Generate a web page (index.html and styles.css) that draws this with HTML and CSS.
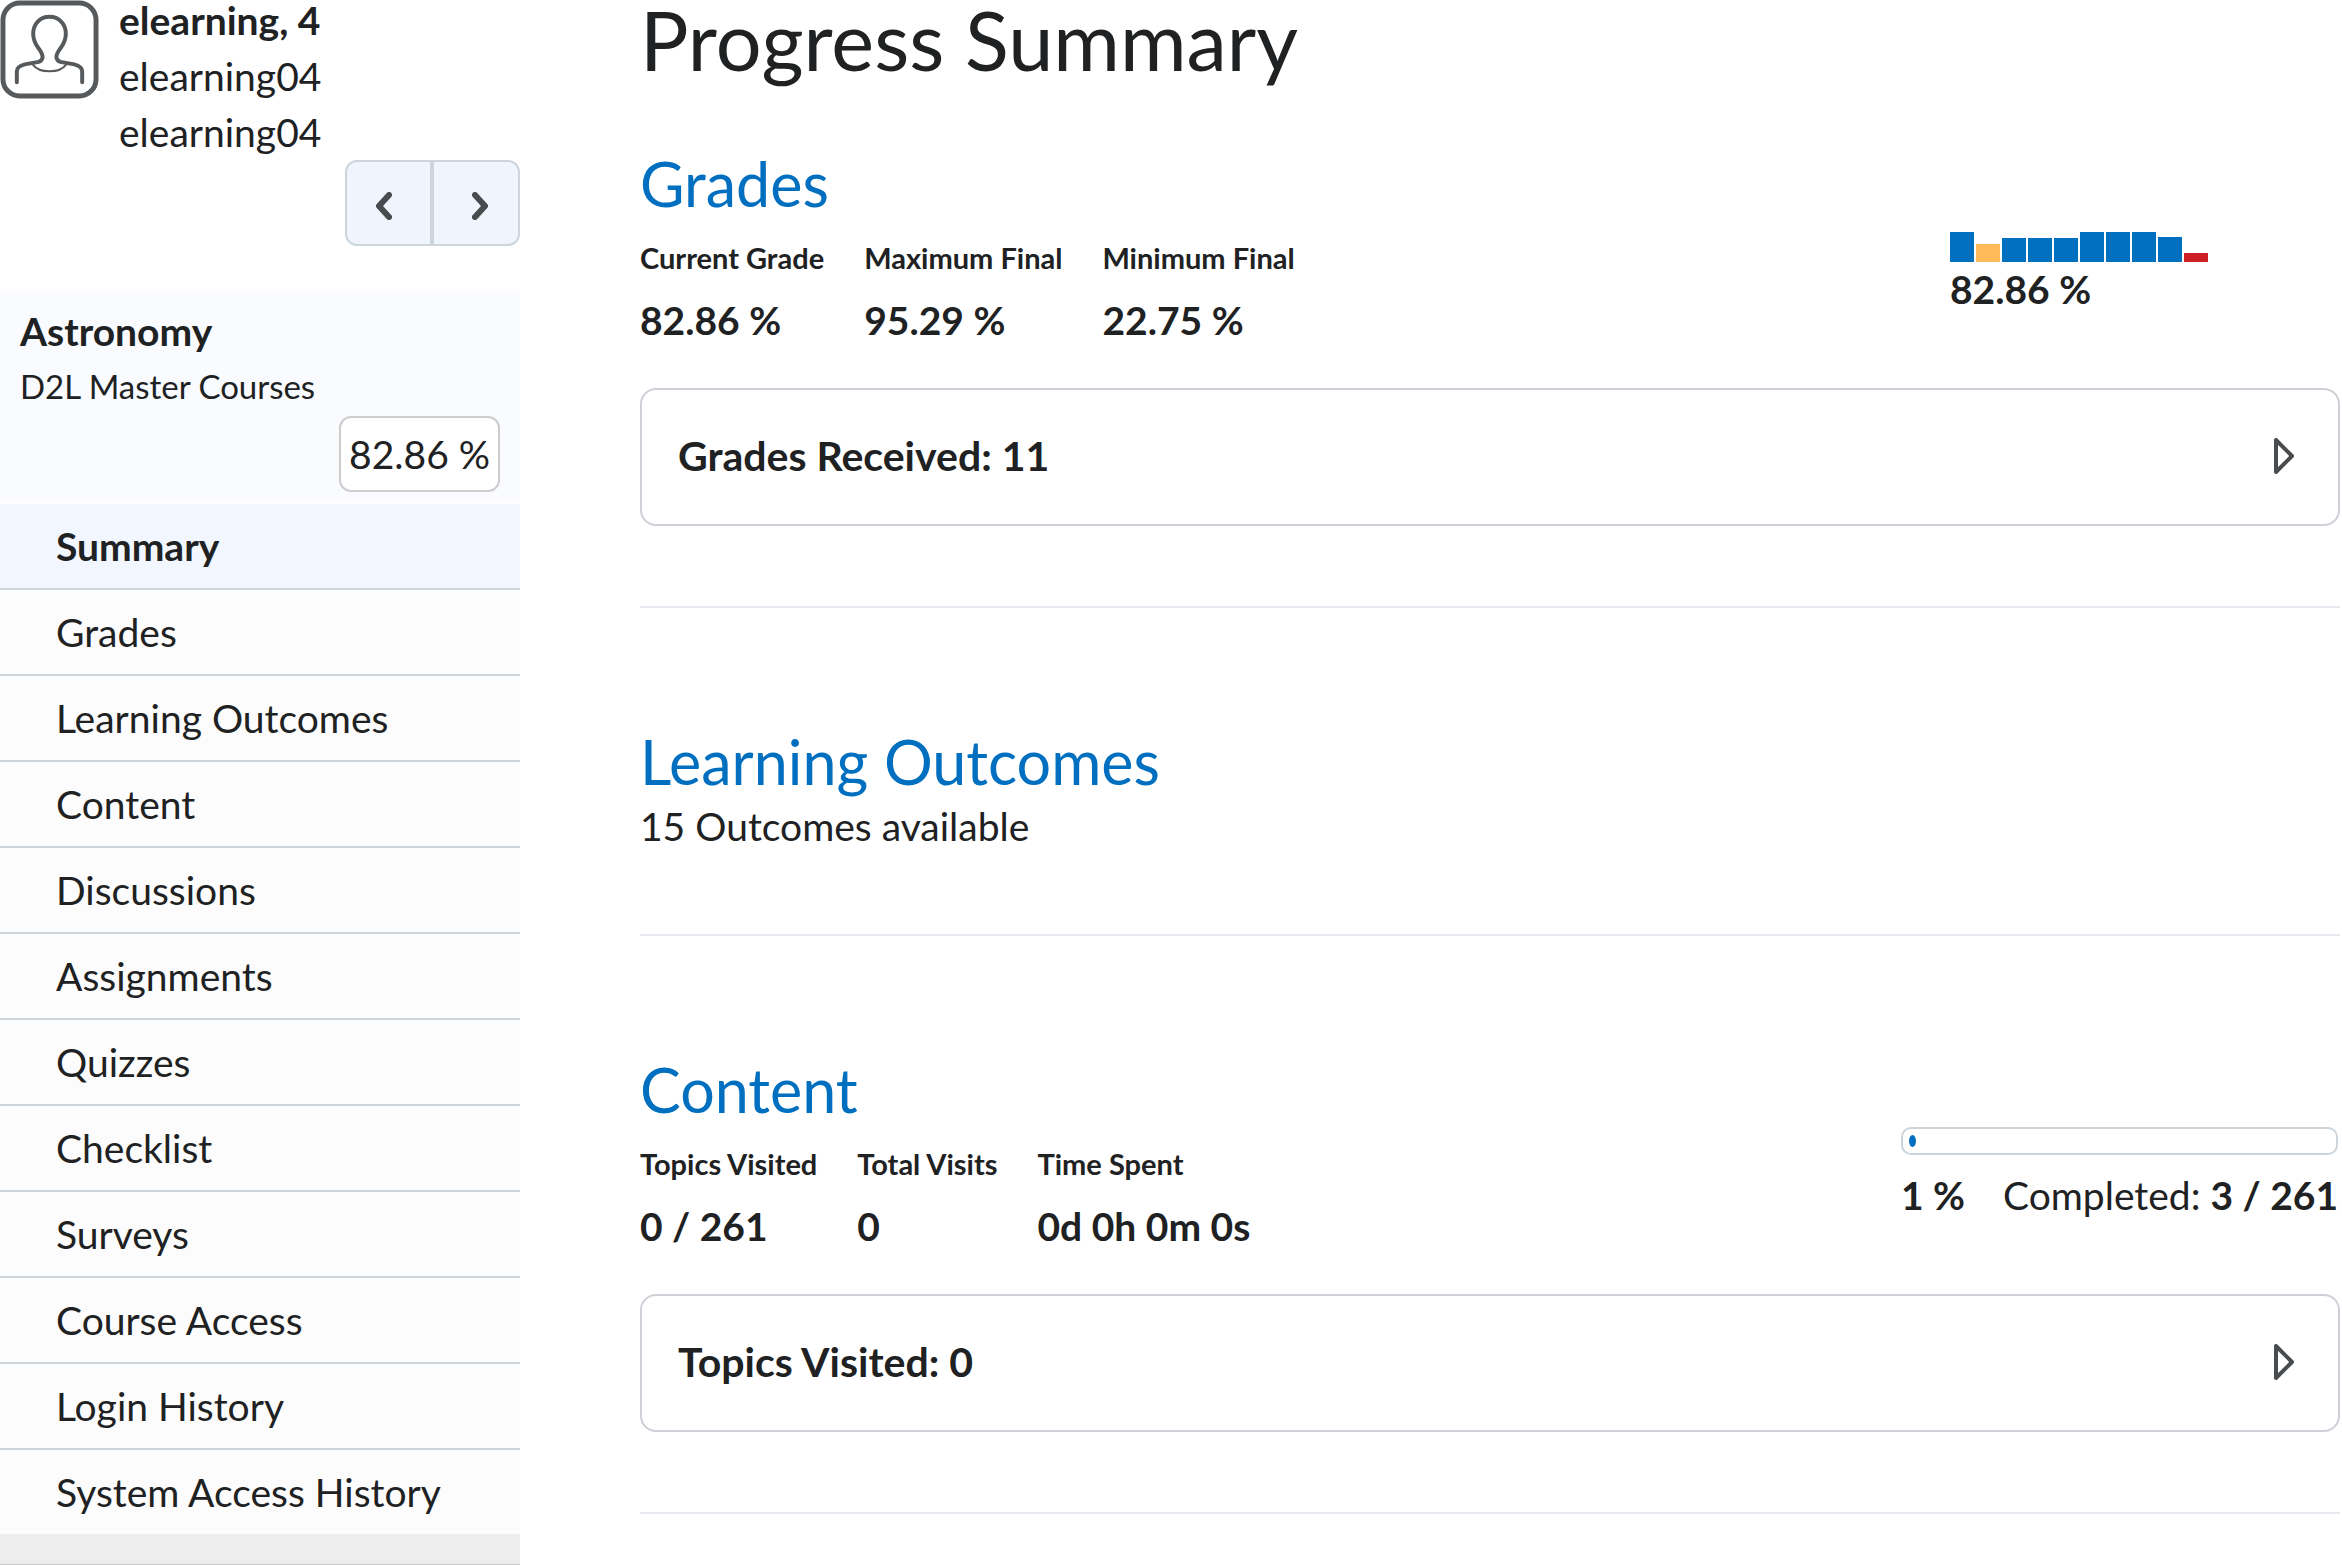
FILE: index.html
```html
<!DOCTYPE html>
<html lang="en">

<head>
    <meta charset="UTF-8">
    <meta name="viewport" content="width=device-width, initial-scale=1.0">
    <title>Progress Summary</title>
    <link rel="stylesheet" href="styles.css">
</head>

<body>
    <aside class="sidebar">
        <!-- user -->
        <div class="user">
            <svg class="avatar" viewBox="0 0 100 100" fill="none" stroke="#565a5c" stroke-linecap="round">
                <rect x="3" y="3" width="94" height="94" rx="17" stroke-width="5" />
                <path stroke-width="4" d="M17 83V72Q17 67 25 65L39 62.500Q43 61 43 57.500Q43 54 38 47.500Q33.500 40.500 33.500 34C33.500 24 40.500 17 50 17S66.500 24 66.500 34Q66.500 40.500 62 47.500Q57 54 57 57.500Q57 61 61 62.500L75 65Q83 67 83 72V83" />
                <path stroke-width="2" d="M33 65Q38 72 50 72T67 65" />
            </svg>
            <div class="user-info">
                <p><b>elearning, 4</b></p>
                <p>elearning04</p>
                <p>elearning04</p>
            </div>
        </div>
        <div class="pager">
            <button type="button" class="pager-btn" aria-label="Previous user">
                <svg class="chevron" viewBox="0 0 16 28"><path d="M13 3L3 14L13 25" /></svg>
            </button>
            <button type="button" class="pager-btn next" aria-label="Next user">
                <svg class="chevron" viewBox="0 0 16 28"><path d="M3 3L13 14L3 25" /></svg>
            </button>
        </div>

        <!-- course -->
        <div class="course">
            <p class="course-name">Astronomy</p>
            <p class="course-org">D2L Master Courses</p>
            <span class="course-grade">82.86 %</span>
        </div>
        <nav>
            <a href="#" class="nav-link active">Summary</a>
            <a href="#" class="nav-link">Grades</a>
            <a href="#" class="nav-link">Learning Outcomes</a>
            <a href="#" class="nav-link">Content</a>
            <a href="#" class="nav-link">Discussions</a>
            <a href="#" class="nav-link">Assignments</a>
            <a href="#" class="nav-link">Quizzes</a>
            <a href="#" class="nav-link">Checklist</a>
            <a href="#" class="nav-link">Surveys</a>
            <a href="#" class="nav-link">Course Access</a>
            <a href="#" class="nav-link">Login History</a>
            <a href="#" class="nav-link">System Access History</a>
        </nav>
        <div class="sidebar-end"></div>
    </aside>

    <main>
        <h1>Progress Summary</h1>

        <section>
            <div class="section-top">
                <div>
                    <h2><a href="#">Grades</a></h2>
                    <dl class="stats">
                        <div>
                            <dt>Current Grade</dt>
                            <dd>82.86 %</dd>
                        </div>
                        <div>
                            <dt>Maximum Final</dt>
                            <dd>95.29 %</dd>
                        </div>
                        <div>
                            <dt>Minimum Final</dt>
                            <dd>22.75 %</dd>
                        </div>
                    </dl>
                </div>
                <div class="grade-chart">
                    <div class="bars">
                        <span class="bar" style="height: 30px"></span>
                        <span class="bar mid" style="height: 18px"></span>
                        <span class="bar" style="height: 24px"></span>
                        <span class="bar" style="height: 24px"></span>
                        <span class="bar" style="height: 24px"></span>
                        <span class="bar" style="height: 30px"></span>
                        <span class="bar" style="height: 30px"></span>
                        <span class="bar" style="height: 30px"></span>
                        <span class="bar" style="height: 25px"></span>
                        <span class="bar low" style="height: 9px"></span>
                    </div>
                    <b>82.86 %</b>
                </div>
            </div>
            <button type="button" class="expander">
                Grades Received: 11
                <svg class="arrow" viewBox="0 0 20 36"><path d="M2 2V34L18 18Z" /></svg>
            </button>
        </section>

        <section>
            <h2><a href="#">Learning Outcomes</a></h2>
            <p class="outcomes">15 Outcomes available</p>
        </section>

        <section>
            <div class="section-top">
                <div>
                    <h2><a href="#">Content</a></h2>
                    <dl class="stats">
                        <div>
                            <dt>Topics Visited</dt>
                            <dd>0 / 261</dd>
                        </div>
                        <div>
                            <dt>Total Visits</dt>
                            <dd>0</dd>
                        </div>
                        <div>
                            <dt>Time Spent</dt>
                            <dd>0d 0h 0m 0s</dd>
                        </div>
                    </dl>
                </div>
                <div class="completion">
                    <div class="track">
                        <div class="fill" style="width: 7px"></div>
                    </div>
                    <div class="completion-text">
                        <b>1 %</b>
                        <span>Completed: <b>3 / 261</b></span>
                    </div>
                </div>
            </div>
            <button type="button" class="expander">
                Topics Visited: 0
                <svg class="arrow" viewBox="0 0 20 36"><path d="M2 2V34L18 18Z" /></svg>
            </button>
        </section>
    </main>
</body>

</html>
```
FILE: styles.css
```css
* {
    box-sizing: border-box;
    margin: 0;
    padding: 0;
}

body {
    display: flex;
    align-items: flex-start;
    gap: 120px;
    padding-right: 2px;
    overflow: hidden;
    background-color: #fff;
    color: #202122;
    font-family: Lato, sans-serif;
    font-size: 39px;
    line-height: 56px;
}

a {
    color: inherit;
    text-decoration: none;
}

button {
    font: inherit;
    color: inherit;
    cursor: pointer;
}

/* sidebar */
.sidebar {
    flex: 0 0 520px;
}

.user {
    display: flex;
    gap: 20px;
}

.avatar {
    width: 99px;
    height: 99px;
}

.user-info {
    margin-top: -8px;
}

.pager {
    display: flex;
    justify-content: flex-end;
}

.pager-btn {
    display: flex;
    align-items: center;
    justify-content: center;
    width: 87px;
    height: 86px;
    padding-top: 6px;
    padding-right: 10px;
    background-color: #f0f5fd;
    border: 2px solid #cdd5dc;
    border-radius: 12px 0 0 12px;
}

.pager-btn.next {
    width: 88px;
    padding-right: 0;
    padding-left: 8px;
    border-radius: 0 12px 12px 0;
}

.chevron {
    width: 16px;
    height: 28px;
    fill: none;
    stroke: #494c4e;
    stroke-width: 6;
    stroke-linecap: round;
    stroke-linejoin: round;
}

.course {
    display: flex;
    flex-direction: column;
    margin-top: 45px;
    margin-bottom: 3px;
    padding: 12px 20px 9px;
    background-color: #f9fbff;
}

.course-name {
    font-weight: bold;
}

.course-org {
    font-size: 33px;
    line-height: 54px;
}

.course-grade {
    align-self: flex-end;
    margin-top: 3px;
    padding: 8px;
    border: 2px solid #cdcdcd;
    border-radius: 12px;
    background-color: #fff;
}

.nav-link {
    display: block;
    padding: 14px 56px;
    background-color: #fcfcfc;
    border-bottom: 2px solid #cdd5dc;
}

.nav-link:last-child {
    border-bottom: 0;
}

.nav-link.active {
    background-color: #f2f7ff;
    font-weight: bold;
}

.sidebar-end {
    height: 31px;
    background-color: #ededed;
    border-bottom: 1px solid #cdcdcd;
}

/* main */
main {
    flex: 1;
    min-width: 0;
}

h1 {
    font-size: 81px;
    font-weight: normal;
    line-height: 80px;
}

h2 {
    color: #006fbf;
    font-size: 61px;
    font-weight: normal;
    line-height: 72px;
}

section {
    padding: 118px 0 80px;
    border-bottom: 2px solid #e6eaf0;
}

h1 + section {
    padding-top: 68px;
}

.section-top {
    display: flex;
    justify-content: space-between;
    margin-bottom: 40px;
}

.stats {
    display: flex;
    gap: 40px;
    margin-top: 16px;
    font-weight: bold;
}

.stats dt {
    margin-bottom: 12px;
    font-size: 29px;
    line-height: 44px;
}

.grade-chart {
    width: 390px;
    padding-top: 84px;
}

.bars {
    display: flex;
    align-items: flex-end;
    gap: 2px;
}

.bar {
    width: 24px;
    background-color: #006fbf;
}

.bar.mid {
    background-color: #ffba59;
}

.bar.low {
    background-color: #cd2026;
}

.grade-chart b {
    display: block;
    line-height: 54px;
}

.completion {
    width: 439px;
    padding: 73px 2px 0 0;
}

.track {
    height: 28px;
    padding: 6px;
    border: 2px solid #cdd5dc;
    border-radius: 10px;
}

.fill {
    height: 12px;
    border-radius: 50%;
    background-color: #006fbf;
}

.completion-text {
    display: flex;
    justify-content: space-between;
    margin-top: 12px;
}

.expander {
    display: flex;
    align-items: center;
    justify-content: space-between;
    width: 100%;
    padding: 38px 44px 40px 36px;
    background-color: #fff;
    border: 2px solid #cdd0d7;
    border-radius: 16px;
    font-size: 41px;
    font-weight: bold;
}

.arrow {
    width: 20px;
    height: 36px;
    fill: none;
    stroke: #494c4e;
    stroke-width: 4;
    stroke-linejoin: round;
}
```
